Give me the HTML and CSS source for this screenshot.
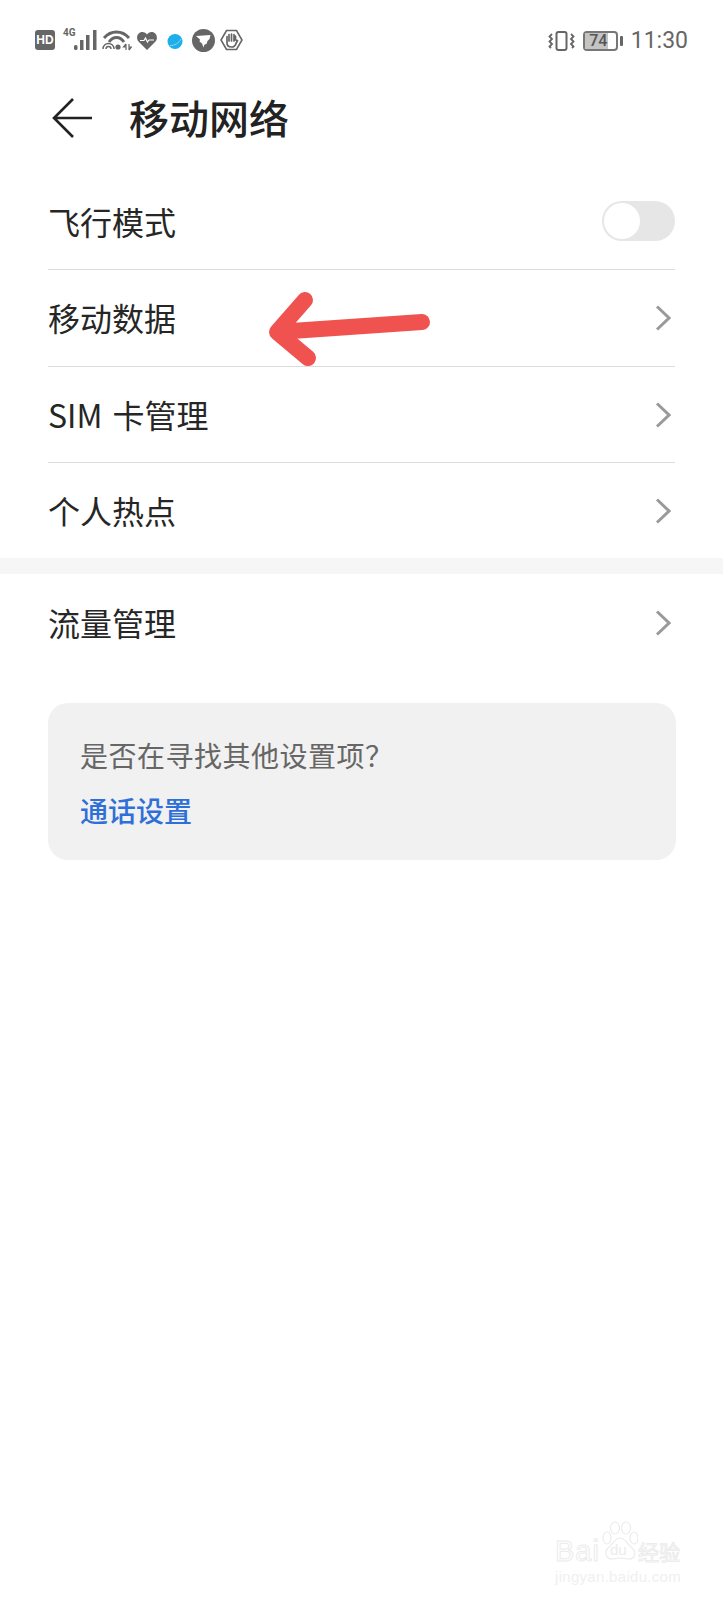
FILE: index.html
```html
<!DOCTYPE html>
<html lang="zh-CN">
    <head>
        <meta charset="UTF-8">
        <meta name="viewport" content="width=device-width, initial-scale=1.0">
        <title>移动网络</title>
        <link rel="stylesheet" href="styles.css">
    </head>
    <body>
        <div class="screen">
            <div class="status">
                <div class="status-left">
                    <span class="hd">HD</span>
                    <span class="net">
                        <span class="net-label">4G</span>
                        <svg class="signal" width="23" height="20" viewBox="0 0 23 20"><rect x="0" y="15" width="3.500" height="5" rx="1.500"/><rect x="6" y="10" width="3.500" height="10"/><rect x="12" y="5" width="3.500" height="15"/><rect x="19" y="0" width="3.500" height="20"/></svg>
                    </span>
                    <svg class="wifi" width="30" height="22" viewBox="0 0 30 22" fill="none" stroke="#666">
                        <path d="M2 9C9 1 20 1 27 9" stroke-width="2.800"/>
                        <path d="M7 13C11 7 18 7 22 13" stroke-width="2.800"/>
                        <path d="M1 20a5.500 5.500 0 0 1 11 0" stroke-width="1.400"/>
                        <path d="M4 20a2.500 2.500 0 0 1 5 0" stroke-width="1.400"/>
                        <circle cx="16" cy="18" r="2.600" fill="#666" stroke="none"/>
                        <path d="M24 15v6M24 15l-2.500 3h2.500M27 21v-6M27 21l2.500-3h-2.500" stroke-width="1.200"/>
                    </svg>
                    <svg class="heart" width="20" height="19" viewBox="0 0 20 19">
                        <path d="M10 19L1.500 10.500C-1.500 7 .5 1 5.500 1 7.500 1 9 2 10 3.500 11 2 12.500 1 14.500 1 19.500 1 21.500 7 18.500 10.500Z" fill="#666"/>
                        <path d="M3 9.500h4l1.500-2.500 2 4 1.500-2h5" fill="none" stroke="#fff" stroke-width="1.200"/>
                    </svg>
                    <svg class="blue-dot" width="16" height="15" viewBox="0 0 16 15">
                        <circle cx="8" cy="7.500" r="7.500" fill="#1eaeea"/>
                        <path d="M3 11.500C7 12 12 9 14 5" fill="none" stroke="#8ad8f5" stroke-width="1"/>
                    </svg>
                    <svg class="bird" width="23" height="23" viewBox="0 0 23 23">
                        <circle cx="11.500" cy="11.500" r="11.500" fill="#666"/>
                        <path d="M4 7L18.500 6 17.500 10 15.500 12 14.500 15 12.500 15.500 11.500 18.500 10 14.500 7.500 12.500 8 10.500Z" fill="#fff"/>
                    </svg>
                    <svg class="hand" width="23" height="22" viewBox="0 0 23 22">
                        <path d="M6.500 1.500H16.500L22 11 16.500 20.500H6.500L1 11Z" fill="#fff" stroke="#666" stroke-width="1.600"/>
                        <path d="M7 7.500v6.500C7 16.500 9 18 11.500 18 14 18 15.500 16.500 16 14.500L17.500 11.500 15.500 11V7M9 12V5.500M11.500 12V5M14 12V5.500" fill="none" stroke="#666" stroke-width="1.700" stroke-linecap="round" stroke-linejoin="round"/>
                    </svg>
                </div>
                <div class="status-right">
                    <svg class="vibrate" width="27" height="20" viewBox="0 0 27 20" fill="none" stroke="#666">
                        <rect x="8.500" y="1" width="10" height="18" rx="2" stroke-width="2"/>
                        <path d="M4 3L1.500 5.500 4 8 1.500 10.500 4 13 1.500 15.500 3 17M23 3L25.500 5.500 23 8 25.500 10.500 23 13 25.500 15.500 24 17" stroke-width="1.800"/>
                    </svg>
                    <div class="battery">
                        <div class="battery-body">
                            <div class="battery-fill"></div>
                            <span class="battery-num">74</span>
                        </div>
                        <div class="battery-tip"></div>
                    </div>
                    <span class="time">11:30</span>
                </div>
            </div>

            <header class="topbar">
                <svg class="back" width="42" height="42" viewBox="0 0 42 42" fill="none" stroke="#222" stroke-width="2.600">
                    <path d="M41 21H3M22 2L3 21 22 40"/>
                </svg>
                <h1 class="title">移动网络</h1>
            </header>

            <ul class="list">
                <li class="row row-line">
                    <span>飞行模式</span>
                    <span class="switch"><span class="knob"></span></span>
                </li>
                <li class="row row-line row-tall">
                    <span>移动数据</span>
                    <svg class="chev" width="16" height="26" viewBox="0 0 16 26"><path d="M2 1.500L14 13 2 24.500"/></svg>
                </li>
                <li class="row row-line">
                    <span>SIM 卡管理</span>
                    <svg class="chev" width="16" height="26" viewBox="0 0 16 26"><path d="M2 1.500L14 13 2 24.500"/></svg>
                </li>
                <li class="row row-end">
                    <span>个人热点</span>
                    <svg class="chev" width="16" height="26" viewBox="0 0 16 26"><path d="M2 1.500L14 13 2 24.500"/></svg>
                </li>
            </ul>

            <div class="band"></div>

            <ul class="list">
                <li class="row row-last">
                    <span>流量管理</span>
                    <svg class="chev" width="16" height="26" viewBox="0 0 16 26"><path d="M2 1.500L14 13 2 24.500"/></svg>
                </li>
            </ul>

            <div class="card">
                <p class="card-text">是否在寻找其他设置项？</p>
                <a class="card-link" href="#">通话设置</a>
            </div>

            <!-- arrow drawn on top of the screenshot -->
            <svg class="mark" width="723" height="400" viewBox="0 0 723 400" fill="none" stroke="#f0534f" stroke-width="16" stroke-linecap="round" stroke-linejoin="round">
                <path d="M305 300L277 332 308 358M277 332L422 322"/>
            </svg>

            <div class="watermark">
                <div class="wm-top">
                    <span class="wm-bai">Bai</span>
                    <div class="wm-logo">
                        <svg class="wm-paw" width="36" height="42" viewBox="0 0 36 42" fill="none" stroke="#ececec" stroke-width="1.200">
                            <ellipse cx="5" cy="17" rx="4" ry="6"/>
                            <ellipse cx="13" cy="7" rx="4.500" ry="6"/>
                            <ellipse cx="24" cy="7" rx="4.500" ry="6"/>
                            <ellipse cx="32" cy="17" rx="4" ry="6"/>
                            <path d="M18 17C13 17 11 23 6 27 2 31 4 38 10 38 14 38 15 37 18 37 21 37 23 38 27 38 33 38 35 31 30 27 25 23 23 17 18 17Z"/>
                        </svg>
                        <span class="wm-du">du</span>
                    </div>
                    <span class="wm-jy">经验</span>
                </div>
                <div class="wm-url">jingyan.baidu.com</div>
            </div>
        </div>
    </body>
</html>
```

FILE: styles.css
```css
*{
    box-sizing: border-box;
    font-family: "Noto Sans CJK SC", "Noto Sans", sans-serif;
}

body, ul, h1, p{
    margin: 0;
    padding: 0;
}

a{
    text-decoration: none;
}

body{
    background: #fff;
}

.screen{
    position: relative;
    width: 723px;
    height: 1600px;
    overflow: hidden;
    background: #fff;
}

/* status bar */
.status{
    height: 80px;
    padding: 0 35px;
    display: flex;
    align-items: center;
    justify-content: space-between;
    color: #666;
}

.status-left, .status-right{
    display: flex;
    align-items: center;
}

.hd{
    width: 20px;
    height: 20px;
    border-radius: 3px;
    background: #666;
    color: #fff;
    font-family: "Liberation Sans", sans-serif;
    font-size: 12px;
    font-weight: bold;
    line-height: 20px;
    text-align: center;
}

.net{
    display: flex;
    align-items: flex-start;
    margin-left: 8px;
}

.net-label{
    font-family: "Roboto", sans-serif;
    font-size: 10px;
    font-weight: bold;
    line-height: 10px;
    width: 11px;
    margin-top: -2px;
}

.signal{
    fill: #666;
}

.wifi{
    margin-left: 5px;
}

.heart{
    margin-left: 5px;
}

.blue-dot{
    margin-left: 10px;
    margin-top: 2px;
}

.bird{
    margin-left: 9px;
}

.hand{
    margin-left: 5px;
}

.status-right{
    padding-top: 2px;
}

.battery{
    display: flex;
    align-items: center;
    margin-left: 8px;
}

.battery-body{
    position: relative;
    width: 35px;
    height: 20px;
    border: 2px solid #777;
    border-radius: 4px;
}

.battery-fill{
    width: 74%;
    height: 100%;
    background: #c4c4c4;
}

.battery-num{
    position: absolute;
    top: 0;
    left: 0;
    width: 27px;
    font-family: "Roboto", sans-serif;
    font-size: 16px;
    font-weight: 500;
    line-height: 16px;
    text-align: center;
    color: #555;
}

.battery-tip{
    width: 3px;
    height: 10px;
    margin-left: 2px;
    border-radius: 1px;
    background: #666;
}

.time{
    margin-left: 8px;
    font-family: "Roboto", sans-serif;
    font-size: 23px;
    line-height: 24px;
    color: #666;
}

/* title */
.topbar{
    height: 76px;
    padding: 0 0 2px 51px;
    display: flex;
    align-items: center;
    gap: 36px;
}

.back{
    margin-top: 2px;
}

.title{
    font-size: 40px;
    font-weight: 500;
    color: #222;
}

/* rows */
.list{
    list-style: none;
    padding: 0 48px;
}

.topbar + .list{
    margin-top: 18px;
}

.row{
    height: 96px;
    padding-bottom: 2px;
    display: flex;
    align-items: center;
    justify-content: space-between;
    font-size: 32px;
    word-spacing: 3px;
    color: #262626;
}

.row-line{
    border-bottom: 1px solid #dcdcdc;
}

.row-tall{
    height: 97px;
}

.row-end{
    height: 95px;
}

.row-last{
    height: 98px;
}

.chev{
    margin: 2px 4px 0 0;
    fill: none;
    stroke: #9a9a9a;
    stroke-width: 3;
}

.switch{
    display: block;
    width: 73px;
    height: 40px;
    padding: 2px;
    border-radius: 20px;
    background: #e6e6e6;
}

.knob{
    display: block;
    width: 36px;
    height: 36px;
    border-radius: 50%;
    background: #fff;
}

.band{
    height: 16px;
    background: #f6f6f6;
}

/* hint card */
.card{
    margin: 31px 47px 0 48px;
    height: 157px;
    padding: 32px 32px;
    border-radius: 20px;
    background: #f1f1f1;
}

.card-text{
    font-size: 28px;
    line-height: 40px;
    letter-spacing: .5px;
    color: #666;
}

.card-link{
    display: block;
    margin-top: 15px;
    font-size: 28px;
    font-weight: 500;
    line-height: 40px;
    color: #2f6fd8;
}

/* overlays */
.mark{
    position: absolute;
    top: 0;
    left: 0;
}

.watermark{
    position: absolute;
    left: 555px;
    top: 1521px;
    width: 130px;
}

.wm-top{
    display: flex;
    align-items: flex-end;
    height: 42px;
}

.wm-bai, .wm-jy{
    color: #fff;
    -webkit-text-stroke: 1px #ececec;
    line-height: 24px;
}

.wm-bai{
    width: 47px;
    font-family: "Liberation Sans", sans-serif;
    font-size: 29px;
    letter-spacing: 1px;
}

.wm-logo{
    position: relative;
    width: 36px;
    height: 42px;
}

.wm-du{
    position: absolute;
    left: 8px;
    top: 21px;
    font-family: "Liberation Sans", sans-serif;
    font-size: 15px;
    line-height: 16px;
    color: #ececec;
}

.wm-jy{
    font-size: 21px;
}

.wm-url{
    margin-top: 6px;
    font-family: "Liberation Sans", sans-serif;
    font-size: 15px;
    letter-spacing: .3px;
    line-height: 16px;
    color: #f0f0f0;
}
```
